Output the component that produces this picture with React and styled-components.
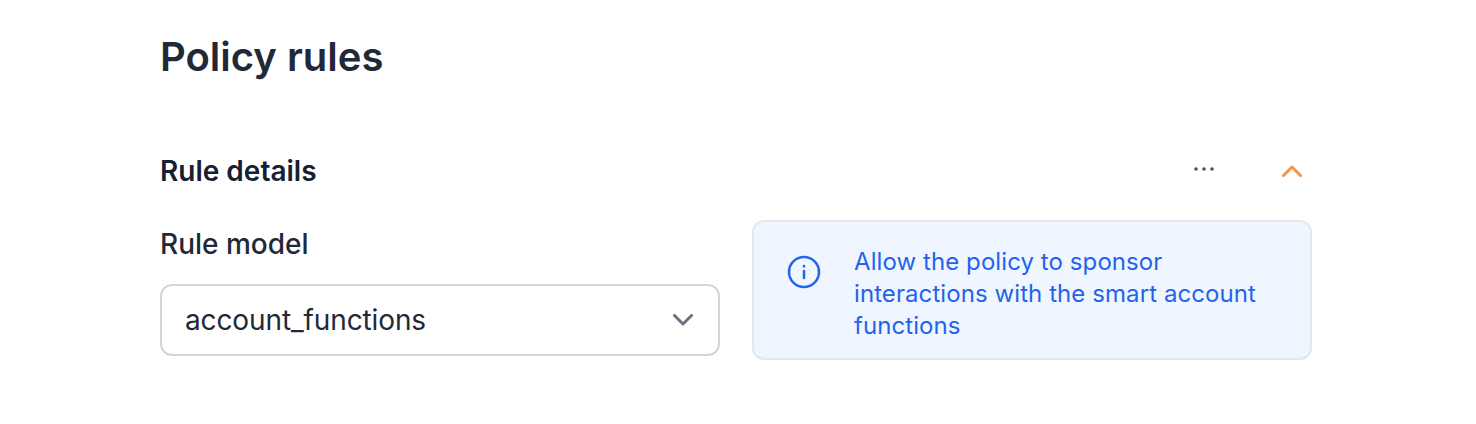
import React from "react";
import styled, { createGlobalStyle } from "styled-components";

const Global = createGlobalStyle`
  html, body { margin: 0; padding: 0; background: #fff; }
  body { font-family: Inter, "Liberation Sans", sans-serif; }
`;

const Page = styled.div`
  width: 1476px;
  height: 424px;
  box-sizing: border-box;
  padding: 32px 164px 0 160px;
`;

const Title = styled.h1`
  margin: 0;
  font-size: 40px;
  line-height: 50px;
  font-weight: 600;
  color: #1f2937;
`;

const RuleHead = styled.div`
  display: flex;
  align-items: center;
  justify-content: space-between;
  margin-top: 73px;
  height: 32px;
`;

const RuleTitle = styled.h2`
  margin: 0;
  font-size: 28px;
  line-height: 32px;
  font-weight: 600;
  color: #172033;
`;

const Actions = styled.div`
  display: flex;
  align-items: center;
  gap: 68px;
  padding-right: 10px;
`;

const Dots = styled.svg`
  margin-bottom: 4px;
`;

const Columns = styled.div`
  display: grid;
  grid-template-columns: 560px 560px;
  gap: 32px;
  margin-top: 33px;
`;

const FieldLabel = styled.div`
  font-size: 28px;
  line-height: 32px;
  font-weight: 500;
  color: #1f2937;
  margin-top: 8px;
`;

const Select = styled.div`
  display: flex;
  align-items: center;
  justify-content: space-between;
  box-sizing: border-box;
  height: 72px;
  margin-top: 24px;
  padding: 0 25px 0 23px;
  border: 2px solid #d1d5db;
  border-radius: 12px;
  font-size: 28px;
  letter-spacing: -0.12px;
  color: #1f2937;
`;

const InfoBox = styled.div`
  display: flex;
  gap: 32px;
  box-sizing: border-box;
  height: 140px;
  padding: 24px 32px;
  background: #eff6ff;
  border: 2px solid #e5e7eb;
  border-radius: 12px;
  color: #2563eb;
  font-size: 24px;
  line-height: 32px;
  letter-spacing: 0.08px;
`;

const InfoIcon = styled.svg`
  flex-shrink: 0;
  margin-top: 8px;
`;

export default function App() {
  return (
    <Page>
      <Global />
      <Title>Policy rules</Title>
      <RuleHead>
        <RuleTitle>Rule details</RuleTitle>
        <Actions>
          <Dots width="20" height="4" viewBox="0 0 20 4" fill="#4b5563">
            <circle cx="2" cy="2" r="1.8" />
            <circle cx="10" cy="2" r="1.8" />
            <circle cx="18" cy="2" r="1.8" />
          </Dots>
          <svg width="20" height="12" viewBox="0 0 20 12" fill="none" stroke="#fb923c" strokeWidth="3" strokeLinecap="round" strokeLinejoin="round">
            <path d="M1.5 10.5 10 2l8.5 8.5" />
          </svg>
        </Actions>
      </RuleHead>
      <Columns>
        <div>
          <FieldLabel>Rule model</FieldLabel>
          <Select>
            account_functions
            <svg width="20" height="12" viewBox="0 0 20 12" fill="none" stroke="#6b7280" strokeWidth="3" strokeLinecap="round" strokeLinejoin="round">
              <path d="M1.5 1.5 10 10l8.5-8.5" />
            </svg>
          </Select>
        </div>
        <InfoBox>
          <InfoIcon width="36" height="36" viewBox="0 0 36 36" fill="none" stroke="#2563eb" strokeWidth="2.5" strokeLinecap="round">
            <circle cx="18" cy="18" r="15" />
            <path d="M18 17v7M18 12v.5" />
          </InfoIcon>
          <div>Allow the policy to sponsor interactions with the smart account functions</div>
        </InfoBox>
      </Columns>
    </Page>
  );
}
